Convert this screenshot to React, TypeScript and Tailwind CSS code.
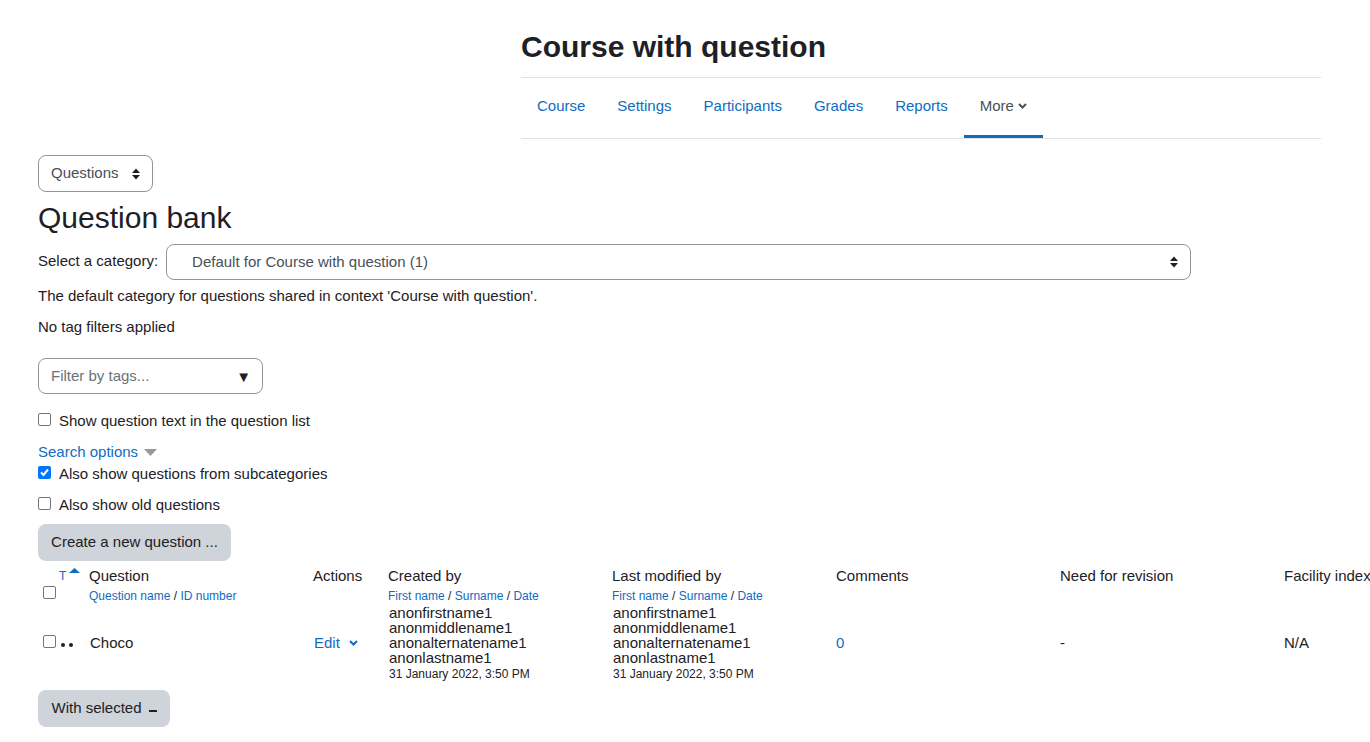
const navItems = ['Course', 'Settings', 'Participants', 'Grades', 'Reports'];

function UpDown() {
  return (
    <svg width="8" height="12" viewBox="0 0 8 12" className="fill-[#1d2125]">
      <path d="M4 0.5 L8 5 H0 Z M0 7 H8 L4 11.5 Z" />
    </svg>
  );
}

function Chevron({ className }: { className: string }) {
  return (
    <svg width="9" height="6" viewBox="0 0 9 6" fill="none" strokeWidth="2" className={className}>
      <path d="M1 1 L4.5 4.5 L8 1" />
    </svg>
  );
}

function Checkbox({ checked = false }: { checked?: boolean }) {
  return checked ? (
    <span className="flex h-[13px] w-[13px] items-center justify-center rounded-[2px] bg-[#0075ff]">
      <svg width="11" height="11" viewBox="0 0 11 11" fill="none" stroke="white" strokeWidth="2">
        <path d="M2 5.5 L4.5 8 L9 2.5" />
      </svg>
    </span>
  ) : (
    <span className="block h-[13px] w-[13px] rounded-[2px] border border-[#767676] bg-white" />
  );
}

function UserCell() {
  return (
    <td className="px-px pt-px align-top">
      <div className="leading-[15px]">anonfirstname1</div>
      <div className="leading-[15px]">anonmiddlename1</div>
      <div className="leading-[15px]">anonalternatename1</div>
      <div className="leading-[15px]">anonlastname1</div>
      <div className="mt-[2px] text-[12px] leading-[15px]">31 January 2022, 3:50 PM</div>
    </td>
  );
}

function HeaderCell({ label, sort }: { label: string; sort: string[] }) {
  return (
    <th className="p-0 text-left align-top font-normal">
      <div className="leading-[18px]">{label}</div>
      <div className="mt-[3px] text-[12px] leading-[16px] text-[#0f6cbf]">
        {sort.map((s, i) => (
          <span key={s}>
            {i > 0 && <span className="text-[#1d2125]"> / </span>}
            {s}
          </span>
        ))}
      </div>
    </th>
  );
}

export default function App() {
  return (
    <div className="h-[742px] overflow-hidden bg-white font-['Liberation_Sans',sans-serif] text-[15px] text-[#1d2125]">
      <header className="ml-[521px] w-[800px] pt-[28px]">
        <h1 className="pb-[11px] text-[30px] leading-[38px] font-bold">Course with question</h1>
        <nav className="flex h-[62px] border-y border-[#dee2e6]">
          {navItems.map((item) => (
            <a key={item} className="flex items-center px-4 pb-[4px] text-[#0f6cbf]">
              {item}
            </a>
          ))}
          <a className="flex items-center gap-[4px] border-b-[3px] border-[#0f6cbf] px-4 pb-px text-[#495057]">
            More
            <Chevron className="stroke-[#495057]" />
          </a>
        </nav>
      </header>

      <main className="pt-[16px] pl-[38px]">
        <div className="flex h-[37px] w-[115px] items-center justify-between rounded-lg border border-[#8f959e] pr-[12px] pl-[12px] text-[#495057]">
          <span>Questions</span>
          <UpDown />
        </div>

        <h2 className="mt-[7px] text-[30px] leading-[38px]">Question bank</h2>

        <div className="mt-[7px] flex items-center">
          <label className="mr-2 -translate-y-px">Select a category:</label>
          <div className="flex h-[36px] w-[1025px] items-center justify-between rounded-lg border border-[#8f959e] pr-[12px] pl-[25px] text-[#495057]">
            <span>Default for Course with question (1)</span>
            <UpDown />
          </div>
        </div>

        <p className="mt-[7px] leading-[18px]">The default category for questions shared in context 'Course with question'.</p>
        <p className="mt-[13px] leading-[18px]">No tag filters applied</p>

        <div className="mt-[22px] flex h-[36px] w-[225px] items-center justify-between rounded-lg border border-[#8f959e] pr-[12px] pl-[12px] text-[#6a737b]">
          <span>Filter by tags...</span>
          <span className="translate-x-px text-[15px] leading-none text-[#1d2125]">▼</span>
        </div>

        <div className="mt-[18px] flex h-[18px] items-center gap-2">
          <span className="-translate-y-[2px]"><Checkbox /></span>
          <span>Show question text in the question list</span>
        </div>

        <div className="mt-[13px] flex h-[18px] items-center gap-[6px]">
          <span className="text-[#0f6cbf]">Search options</span>
          <svg width="13" height="7" viewBox="0 0 13 7" className="fill-[#999999]">
            <path d="M0 0 H13 L6.5 7 Z" />
          </svg>
        </div>

        <div className="mt-[4px] flex h-[18px] items-center gap-2">
          <span className="-translate-y-[2px]"><Checkbox checked /></span>
          <span>Also show questions from subcategories</span>
        </div>

        <div className="mt-[13px] flex h-[18px] items-center gap-2">
          <span className="-translate-y-[2px]"><Checkbox /></span>
          <span>Also show old questions</span>
        </div>

        <button className="mt-[10px] flex h-[37px] w-[193px] items-center justify-center rounded-lg bg-[#ced4da]">
          <span>Create a new question ...</span>
        </button>

        <table className="mt-[6px] w-[1470px] table-fixed border-collapse">
          <colgroup>
            <col className="w-[51px]" />
            <col className="w-[224px]" />
            <col className="w-[75px]" />
            <col className="w-[224px]" />
            <col className="w-[224px]" />
            <col className="w-[224px]" />
            <col className="w-[224px]" />
            <col className="w-[224px]" />
          </colgroup>
          <thead>
            <tr className="h-[37px]">
              <th className="relative p-0 align-top font-normal">
                <span className="absolute top-[1px] left-[21px] text-[12px] leading-[16px] text-[#0f6cbf]">T</span>
                <svg width="11" height="5" viewBox="0 0 11 5" className="absolute top-[1px] left-[31px] fill-[#0f6cbf]">
                  <path d="M5.5 0 L11 5 H0 Z" />
                </svg>
                <span className="absolute top-[19px] left-[5px]"><Checkbox /></span>
              </th>
              <HeaderCell label="Question" sort={['Question name', 'ID number']} />
              <HeaderCell label="Actions" sort={[]} />
              <HeaderCell label="Created by" sort={['First name', 'Surname', 'Date']} />
              <HeaderCell label="Last modified by" sort={['First name', 'Surname', 'Date']} />
              <HeaderCell label="Comments" sort={[]} />
              <HeaderCell label="Need for revision" sort={[]} />
              <th className="p-0 text-left align-top leading-[18px] font-normal whitespace-nowrap">Facility index</th>
            </tr>
          </thead>
          <tbody>
            <tr className="h-[78px]">
              <td className="p-0 align-middle">
                <div className="flex items-center pl-[5px]">
                  <span className="-translate-y-[2px]"><Checkbox /></span>
                  <span className="ml-[5px] flex translate-y-[2px] gap-[4px]">
                    <span className="h-[4px] w-[4px] rounded-full bg-[#1d2125]" />
                    <span className="h-[4px] w-[4px] rounded-full bg-[#1d2125]" />
                  </span>
                </div>
              </td>
              <td className="px-px">Choco</td>
              <td className="px-px text-[#0f6cbf]">
                <div className="flex items-center gap-[9px]">
                  Edit
                  <Chevron className="stroke-[#0f6cbf]" />
                </div>
              </td>
              <UserCell />
              <UserCell />
              <td className="p-0 text-[#0f6cbf]">0</td>
              <td className="p-0">-</td>
              <td className="p-0">N/A</td>
            </tr>
          </tbody>
        </table>

        <button className="mt-[8px] flex h-[37px] w-[132px] items-center justify-center gap-[7px] rounded-lg bg-[#ced4da]">
          <span>With selected</span>
          <span className="mt-[5px] h-[2px] w-[8px] bg-[#1d2125]" />
        </button>
      </main>
    </div>
  );
}
